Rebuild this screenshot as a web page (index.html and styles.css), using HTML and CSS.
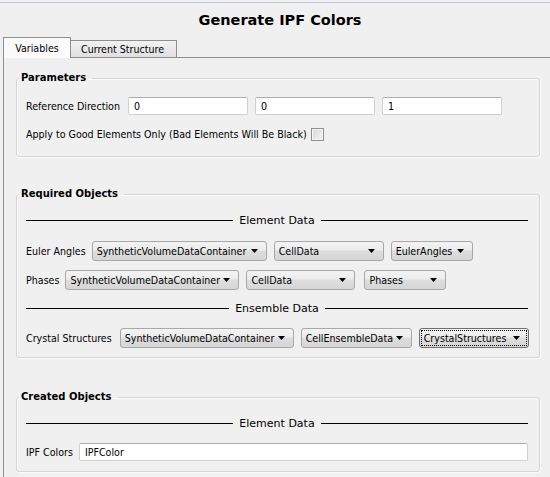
FILE: index.html
```html
<!DOCTYPE html>
<html>
<head>
<meta charset="utf-8">
<link rel="stylesheet" href="styles.css">
</head>
<body>
<div class="window">
  <div class="topline"></div>
  <div class="title">Generate IPF Colors</div>
  <div class="tabs">
    <div class="tab active">Variables</div>
    <div class="tab">Current Structure</div>
  </div>
  <div class="pane">
    <fieldset class="group g-params">
      <legend>Parameters</legend>
      <div class="row r-ref">
        <span class="label">Reference Direction</span>
        <div class="inputs">
          <div class="input w120">0</div>
          <div class="input w120">0</div>
          <div class="input w120">1</div>
        </div>
      </div>
      <div class="row r-apply">
        <span class="label">Apply to Good Elements Only (Bad Elements Will Be Black)</span>
        <span class="check"></span>
      </div>
    </fieldset>

    <fieldset class="group g-req">
      <legend>Required Objects</legend>
      <div class="sep"><span class="line"></span><span class="sep-text">Element Data</span><span class="line"></span></div>
      <div class="row r-combo">
        <span class="label">Euler Angles</span>
        <div class="combos">
          <div class="combo w175"><span class="ctext">SyntheticVolumeDataContainer</span><svg class="arrow" width="7" height="4" viewBox="0 0 7 4"><polygon points="0,0 7,0 3.5,4" fill="#000"/></svg></div>
          <div class="combo w110"><span class="ctext">CellData</span><svg class="arrow" width="7" height="4" viewBox="0 0 7 4"><polygon points="0,0 7,0 3.5,4" fill="#000"/></svg></div>
          <div class="combo w82"><span class="ctext">EulerAngles</span><svg class="arrow" width="7" height="4" viewBox="0 0 7 4"><polygon points="0,0 7,0 3.5,4" fill="#000"/></svg></div>
        </div>
      </div>
      <div class="row r-combo r-phases">
        <span class="label">Phases</span>
        <div class="combos">
          <div class="combo w174"><span class="ctext">SyntheticVolumeDataContainer</span><svg class="arrow" width="7" height="4" viewBox="0 0 7 4"><polygon points="0,0 7,0 3.5,4" fill="#000"/></svg></div>
          <div class="combo w109"><span class="ctext">CellData</span><svg class="arrow" width="7" height="4" viewBox="0 0 7 4"><polygon points="0,0 7,0 3.5,4" fill="#000"/></svg></div>
          <div class="combo w82 ml3"><span class="ctext">Phases</span><svg class="arrow" width="7" height="4" viewBox="0 0 7 4"><polygon points="0,0 7,0 3.5,4" fill="#000"/></svg></div>
        </div>
      </div>
      <div class="sep sep2"><span class="line"></span><span class="sep-text">Ensemble Data</span><span class="line"></span></div>
      <div class="row r-combo r-crystal">
        <span class="label">Crystal Structures</span>
        <div class="combos">
          <div class="combo w174"><span class="ctext">SyntheticVolumeDataContainer</span><svg class="arrow" width="7" height="4" viewBox="0 0 7 4"><polygon points="0,0 7,0 3.5,4" fill="#000"/></svg></div>
          <div class="combo w111"><span class="ctext">CellEnsembleData</span><svg class="arrow" width="7" height="4" viewBox="0 0 7 4"><polygon points="0,0 7,0 3.5,4" fill="#000"/></svg></div>
          <div class="combo w110 focus"><span class="ctext">CrystalStructures</span><svg class="arrow" width="7" height="4" viewBox="0 0 7 4"><polygon points="0,0 7,0 3.5,4" fill="#000"/></svg></div>
        </div>
      </div>
    </fieldset>

    <fieldset class="group g-created">
      <legend>Created Objects</legend>
      <div class="sep"><span class="line"></span><span class="sep-text">Element Data</span><span class="line"></span></div>
      <div class="row r-ipf">
        <span class="label">IPF Colors</span>
        <div class="input grow">IPFColor</div>
      </div>
    </fieldset>
  </div>
</div>
</body>
</html>
```
FILE: styles.css
```css
html, body {
  margin: 0;
  padding: 0;
}
body {
  background: #f0f0f0;
  width: 550px;
  height: 477px;
  overflow: hidden;
  font-family: "DejaVu Sans Condensed", "Liberation Sans", Arial, sans-serif;
  font-size: 10.6px;
  color: #000;
}
.window {
  width: 550px;
}
.topline {
  margin-top: 2px;
  height: 0;
  border-top: 1px solid #bcc6d4;
}
.title {
  height: 34px;
  display: flex;
  align-items: center;
  justify-content: center;
  padding-left: 10px;
  font-family: "DejaVu Sans", sans-serif;
  font-weight: bold;
  font-size: 14.5px;
}
.tabs {
  display: flex;
  align-items: flex-end;
  margin-left: 3px;
  height: 21px;
  position: relative;
  z-index: 2;
}
.tab {
  box-sizing: border-box;
  border: 1px solid #8c8e94;
  border-bottom: none;
  height: 17px;
  margin-bottom: 1px;
  display: flex;
  align-items: center;
  background: linear-gradient(#f2f2f2, #e0e0e0);
  border-left: none;
}
.tab.active {
  height: 21px;
  margin-bottom: 0;
  border-left: 1px solid #8c8e94;
  background: #fbfbfb;
  width: 68px;
  justify-content: center;
}
.tab:not(.active) {
  width: 106px;
  padding: 0 0 0 10px;
}
.pane {
  margin-top: -1px;
  margin-left: 3px;
  width: 560px;
  height: 430px;
  border-top: 1px solid #8c8e94;
  border-left: 1px solid #8c8e94;
  box-sizing: border-box;
  padding-top: 13px;
  position: relative;
  z-index: 1;
}
.group {
  margin: 0 23px 0 12px;
  border: 1px solid #d5d5d5;
  border-radius: 3px;
  box-shadow: inset 1px 1px 0 #fbfbfb, 1px 1px 0 #fbfbfb;
  padding: 0 11px 13px 9px;
  min-width: 0;
}
.group legend {
  font-family: "DejaVu Sans", sans-serif;
  font-weight: bold;
  font-size: 10px;
  line-height: 14px;
  margin-left: -7px;
  padding: 0 6px 0 2px;
}
.g-req {
  margin-top: 30px;
  padding-bottom: 9px;
}
.g-created {
  margin-top: 32px;
  padding-bottom: 10px;
}
.row {
  display: flex;
  align-items: center;
  gap: 6px;
}
.label {
  white-space: nowrap;
}
.r-ref {
  margin-top: 12px;
  height: 18px;
  gap: 8px;
}
.r-apply {
  margin-top: 10px;
  height: 18px;
  gap: 3px;
}
.inputs, .combos {
  display: flex;
  align-items: center;
  gap: 7px;
}
.input {
  box-sizing: border-box;
  height: 18px;
  background: #fff;
  border: 1px solid #d0d0d0;
  border-top-color: #abadb3;
  border-radius: 2px;
  padding: 0 5px;
  display: flex;
  align-items: center;
}
.w120 { width: 120px; }
.grow { flex: 1; }
.check {
  box-sizing: border-box;
  width: 13px;
  height: 13px;
  border: 1px solid #8f8f8f;
  background: linear-gradient(135deg, #d6d6d6, #f6f6f6);
  box-shadow: inset 0 0 0 1px #f4f4f4;
  margin-left: 1px;
}
.sep {
  display: flex;
  align-items: center;
  gap: 6px;
  height: 14px;
  margin-top: 12px;
}
.sep .line {
  flex: 1;
  height: 0;
  border-top: 1px solid #000;
}
.sep-text {
  font-family: "DejaVu Sans", sans-serif;
  font-size: 11px;
}
.sep2 {
  margin-top: 11px;
}
.r-combo {
  margin-top: 14px;
  height: 20px;
}
.r-phases {
  margin-top: 9px;
}
.r-crystal {
  margin-top: 13px;
  gap: 8px;
}
.combo {
  box-sizing: border-box;
  height: 20px;
  border: 1px solid #a8a8a8;
  border-radius: 3px;
  background: linear-gradient(#f3f3f3 0%, #ececec 45%, #dddddd 50%, #d6d6d6 100%);
  display: flex;
  align-items: center;
  padding: 0 8px 0 4px;
  position: relative;
}
.combo .ctext {
  flex: 1;
  white-space: nowrap;
  overflow: hidden;
}
.combo .arrow {
  flex: none;
}
.combo.focus {
  border-color: #707070;
}
.combo.focus::after {
  content: "";
  position: absolute;
  left: 1px;
  top: 1px;
  right: 1px;
  bottom: 1px;
  border: 1px dotted #000;
}
.w175 { width: 175px; }
.w174 { width: 174px; }
.w110 { width: 110px; }
.w109 { width: 109px; }
.w111 { width: 111px; }
.w82 { width: 82px; }
.ml3 { margin-left: 2px; }
.r-ipf {
  margin-top: 13px;
  height: 18px;
}
```
